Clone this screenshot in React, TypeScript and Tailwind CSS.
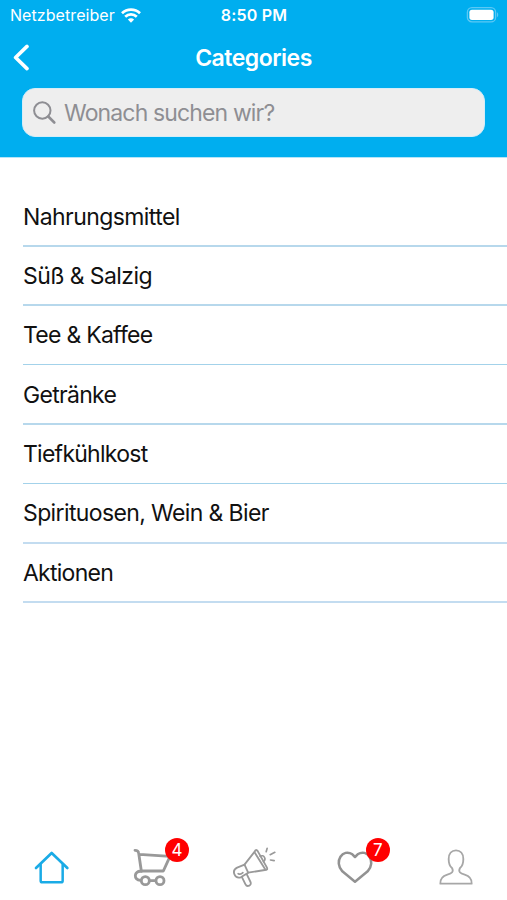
import type { ReactNode } from "react";

const categories = [
  { name: "Nahrungsmittel", row: "h-[60px] border-b-2 border-[#b7d8ec] pt-[2px]", text: "tracking-[-0.58px]" },
  { name: "Süß & Salzig", row: "h-[59px] border-b-2 border-[#b7d8ec] pt-[2px]", text: "tracking-[-0.58px]" },
  { name: "Tee & Kaffee", row: "h-[59px] border-b border-[#a3d2ea]", text: "tracking-[-0.74px]" },
  { name: "Getränke", row: "h-[60px] border-b-2 border-[#b7d8ec] pt-[2px]", text: "tracking-[-0.7px]" },
  { name: "Tiefkühlkost", row: "h-[59px] border-b border-[#a3d2ea]", text: "tracking-[-0.74px]" },
  { name: "Spirituosen, Wein & Bier", row: "h-[60px] border-b-2 border-[#c3dcf0]", text: "tracking-[-0.62px]" },
  { name: "Aktionen", row: "h-[59px] border-b-2 border-[#c3dcf0] pt-[2px]", text: "tracking-[-0.75px]" },
];

function StatusBar() {
  return (
    <div className="grid h-[30px] grid-cols-3 items-center pl-[10px] pr-[8px] text-[16px] leading-none">
      <div className="flex items-center gap-[6px]">
        <span className="tracking-[0.07px]">Netzbetreiber</span>
        <svg className="h-[15px] w-5" viewBox="0 0 20 15" fill="none" stroke="currentColor" strokeWidth="2.7">
          <path d="M1 5.3C6 .4 14 .4 19 5.3" />
          <path d="M4.2 8.8c3.3-3.2 8.3-3.2 11.6 0" />
          <path d="M10 14.7 6.9 11.5c1.7-1.6 4.5-1.6 6.2 0Z" fill="currentColor" stroke="none" />
        </svg>
      </div>
      <span className="pr-px text-center font-semibold tracking-[0.2px]">8:50 PM</span>
      <svg className="h-4 w-[33px] justify-self-end" viewBox="0 0 33 16">
        <rect x="1.4" y=".7" width="28.2" height="14.2" rx="4.5" fill="none" stroke="#5cc8f4" strokeWidth="1.3" />
        <rect x="3.4" y="2.7" width="24.2" height="10.2" rx="2.6" fill="#fff" />
        <path d="M31 5.3c1.6.8 1.6 4.2 0 5Z" fill="#5cc8f4" />
      </svg>
    </div>
  );
}

function Header() {
  return (
    <header className="h-[158px] border-b border-[#b5e4f8] bg-[#00aeef] text-white">
      <StatusBar />
      <div className="grid h-[58px] grid-cols-[40px_1fr_40px] items-center">
        <button aria-label="Back" className="pb-[3px] pl-[13px]">
          <svg className="h-[27px] w-4" viewBox="0 0 16 27" fill="none" stroke="currentColor" strokeWidth="3.6" strokeLinecap="round" strokeLinejoin="round">
            <path d="M14 2.4 2.6 13.5 14 24.6" />
          </svg>
        </button>
        <h1 className="pb-[2px] text-center text-[23px] font-semibold tracking-[-0.5px]">Categories</h1>
      </div>
      <div className="mx-[22px] flex h-[49px] items-center rounded-[13px] border border-[#d5edf8] bg-[#eeeeee] pl-[10px] text-[#8e8e93]">
        <svg className="h-6 w-6" viewBox="0 0 24 24" fill="none" stroke="currentColor" strokeLinecap="round">
          <circle cx="9.3" cy="9.5" r="8.2" strokeWidth="2" />
          <path d="m15.3 15.5 6 6" strokeWidth="2.6" />
        </svg>
        <span className="pl-[7px] pt-[2px] text-[23px] tracking-[-0.86px]">Wonach suchen wir?</span>
      </div>
    </header>
  );
}

type TabProps = {
  viewBox: string;
  color: string;
  badge?: number;
  badgeClass?: string;
  children: ReactNode;
};

function Tab({ viewBox, color, badge, badgeClass = "", children }: TabProps) {
  return (
    <button className={`relative flex flex-1 justify-center ${color}`}>
      <svg className="h-[70px] w-[90px]" viewBox={viewBox} fill="none" stroke="currentColor" strokeWidth="8.5" strokeLinecap="round" strokeLinejoin="round">
        {children}
      </svg>
      {badge && (
        <span className={`absolute left-1/2 top-[8px] flex h-6 w-6 items-center justify-center rounded-full bg-[#ff0000] pt-px text-[17px] text-white ${badgeClass}`}>
          {badge}
        </span>
      )}
    </button>
  );
}

function TabBar() {
  return (
    <nav className="flex h-[70px]">
      <Tab viewBox="-42 0 270 210" color="text-[#1aabe6]">
        <path d="M48 114 95 69 142 114" strokeWidth="8" />
        <path d="M62 104v48q0 5 5 5h56q5 0 5-5v-48" strokeWidth="7.5" />
      </Tab>
      <Tab viewBox="-39 0 270 210" color="text-[#999999]" badge={4} badgeClass="ml-[13px]">
        <path d="M45 61q10 0 11 8l8 54h66l20-44-92-6" />
        <path d="M64 124c-23-3-24 27-3 27M91 152h14" />
        <circle cx="76" cy="152" r="12" />
        <circle cx="120" cy="152" r="12" />
      </Tab>
      <Tab viewBox="-34.5 0 270 210" color="text-[#999999]">
        <g strokeWidth="5.5">
          <path d="M72 104 103 64q4-8 9 0l27 48q4 8-6 8l-50 8" />
          <path d="m103 68 31 50M72 104 50 113c-18 9-8 34 11 29l22-14Z" />
          <path d="M119 79c10-7 20 8 10 16M53 131q8 4 14-3" strokeWidth="5" />
          <path d="m65 143 10 20c5 10 20 3 15-7l-11-23" />
          <path d="m137 65 3-10M149 74l14-7M150 90l11 2" strokeWidth="5" />
        </g>
      </Tab>
      <Tab viewBox="-30 0 270 210" color="text-[#929292]" badge={7} badgeClass="ml-[11px]">
        <path d="M105 155 67 124C40 94 69 54 97 73l8 8 8-8c28-19 57 21 30 51Z" strokeWidth="7.5" />
      </Tab>
      <Tab viewBox="-17 0 270 210" color="text-[#a7a7a7]">
        <path d="M71 161c-1-17 8-23 21-27 14-4 20-9 14-20-9-7-10-17-10-27 0-16 9-26 22-26s22 10 22 26c0 10-1 20-10 27-6 11 0 16 14 20 13 4 22 10 21 27Z" strokeWidth="5.5" />
      </Tab>
    </nav>
  );
}

export default function App() {
  return (
    <div className="flex h-[900px] w-[507px] flex-col overflow-hidden bg-white font-['Inter','Liberation_Sans',sans-serif]">
      <Header />
      <main className="flex-1 pl-[23px] pt-[29px]">
        <ul>
          {categories.map((c) => (
            <li key={c.name} className={`flex items-center text-[23px] text-[#111111] ${c.row}`}>
              <span className={c.text}>{c.name}</span>
            </li>
          ))}
        </ul>
      </main>
      <TabBar />
    </div>
  );
}
